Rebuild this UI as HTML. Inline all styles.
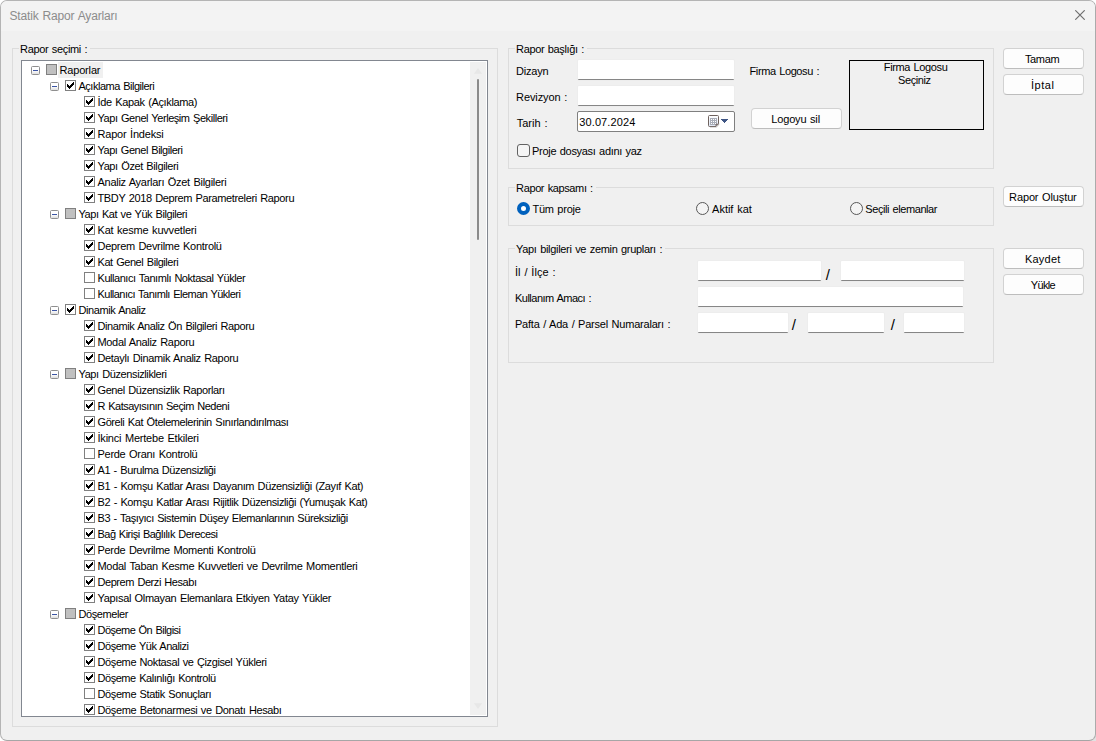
<!DOCTYPE html>
<html lang="tr">
<head>
<meta charset="utf-8">
<title>Statik Rapor Ayarları</title>
<style>
html,body{margin:0;padding:0;}
body{width:1096px;height:741px;background:#fff;position:relative;overflow:hidden;font-family:"Liberation Sans",sans-serif;font-size:11px;color:#000;}
#win{position:absolute;left:0;top:0;width:1094px;height:739px;border:1px solid #b4b4b4;border-right-color:#ababab;border-bottom-color:#a6a6a6;border-radius:7px;background:#f0f0f0;overflow:hidden;}
#win *{position:absolute;box-sizing:border-box;}
#title{left:0;top:0;width:1094px;height:30px;background:#f3f3f3;}
.t{white-space:nowrap;line-height:16px;height:16px;word-spacing:0.8px;}
.grp{border:1px solid #dcdcdc;}
.tree{left:20px;top:59px;width:467px;height:657px;border:1px solid #828790;background:#fff;overflow:hidden;}
.cb{width:11px;height:11px;border:1px solid #808080;background:#fff;}
.cb.g{background:#c0c0c0;}
.cb svg{left:1px;top:1px;width:7px;height:7px;}
.ex{width:9px;height:9px;border:1px solid #8f8f8f;border-radius:1.5px;background:linear-gradient(#fff 0%,#fff 50%,#dedede 100%);}
.ex i{left:1px;top:3px;width:5px;height:1px;background:#3b55a5;}
.in{background:#fff;border-bottom:1px solid #868686;box-shadow:0 0 0 1px #ededed;border-radius:1px;}
.btn{background:#fdfdfd;border:1px solid #d2d2d2;border-bottom-color:#bdbdbd;border-radius:4px;}
.rd{width:13px;height:13px;border-radius:50%;border:1px solid #585858;background:#f4f4f4;}
.rd.on{border:4px solid #0061bd;background:#fff;}
</style>
</head>
<body>
<div style="position:absolute;left:1086px;top:731px;width:10px;height:10px;background:#e2e2e2"></div>
<div id="win">
<div id="title"></div>

<svg style="left:1074px;top:9px;width:10px;height:10px" viewBox="0 0 10 10"><path d="M0.3 0.3 L9.7 9.7 M9.7 0.3 L0.3 9.7" stroke="#6e6e6e" stroke-width="1.15" fill="none"/></svg>
<div class="grp" style="left:11px;top:47px;width:486px;height:679px"></div>
<div class="grp" style="left:507px;top:47px;width:486px;height:121px"></div>
<div class="grp" style="left:507px;top:186px;width:486px;height:39px"></div>
<div class="grp" style="left:507px;top:247px;width:486px;height:115px"></div>
<div class="tree" style="left:20px;top:59px;width:467px;height:657px">
<div style="left:448px;top:1px;width:16px;height:653px;background:#f0f0f0"></div>
<div style="left:455px;top:18px;width:2px;height:161px;background:#8b8b8b;border-radius:1px"></div>
<svg style="left:452px;top:7px;width:8px;height:6px" viewBox="0 0 8 6"><path d="M4 0 L8 5.8 L0 5.8 Z" fill="#e7e7e7"/></svg>
<svg style="left:452px;top:642px;width:8px;height:6px" viewBox="0 0 8 6"><path d="M4 6 L8 0.2 L0 0.2 Z" fill="#e7e7e7"/></svg>
<div class="ex" style="left:9px;top:5px"><i></i></div>
<div class="cb g" style="left:24px;top:3px"></div>
<div style="left:36px;top:1px;width:45px;height:16px;background:#f0f0f0"></div>
<div class="t" style="left:37.5px;top:1px;letter-spacing:-0.170px">Raporlar</div>
<div class="ex" style="left:28px;top:21px"><i></i></div>
<div class="cb" style="left:43px;top:19px"><svg viewBox="0 0 7 7"><path d="M0 2h1v1h1v1h1v-1h1v-1h1v-1h1v-1h1v3h-1v1h-1v1h-1v1h-1v1h-1v-1h-1v-1h-1z" fill="#000"/></svg></div>
<div class="t" style="left:56.5px;top:17px;letter-spacing:-0.491px">Açıklama Bilgileri</div>
<div class="cb" style="left:62px;top:35px"><svg viewBox="0 0 7 7"><path d="M0 2h1v1h1v1h1v-1h1v-1h1v-1h1v-1h1v3h-1v1h-1v1h-1v1h-1v1h-1v-1h-1v-1h-1z" fill="#000"/></svg></div>
<div class="t" style="left:75.5px;top:33px;letter-spacing:-0.356px">İde Kapak (Açıklama)</div>
<div class="cb" style="left:62px;top:51px"><svg viewBox="0 0 7 7"><path d="M0 2h1v1h1v1h1v-1h1v-1h1v-1h1v-1h1v3h-1v1h-1v1h-1v1h-1v1h-1v-1h-1v-1h-1z" fill="#000"/></svg></div>
<div class="t" style="left:75.5px;top:49px;letter-spacing:-0.440px">Yapı Genel Yerleşim Şekilleri</div>
<div class="cb" style="left:62px;top:67px"><svg viewBox="0 0 7 7"><path d="M0 2h1v1h1v1h1v-1h1v-1h1v-1h1v-1h1v3h-1v1h-1v1h-1v1h-1v1h-1v-1h-1v-1h-1z" fill="#000"/></svg></div>
<div class="t" style="left:75.5px;top:65px;letter-spacing:-0.206px">Rapor İndeksi</div>
<div class="cb" style="left:62px;top:83px"><svg viewBox="0 0 7 7"><path d="M0 2h1v1h1v1h1v-1h1v-1h1v-1h1v-1h1v3h-1v1h-1v1h-1v1h-1v1h-1v-1h-1v-1h-1z" fill="#000"/></svg></div>
<div class="t" style="left:75.5px;top:81px;letter-spacing:-0.465px">Yapı Genel Bilgileri</div>
<div class="cb" style="left:62px;top:99px"><svg viewBox="0 0 7 7"><path d="M0 2h1v1h1v1h1v-1h1v-1h1v-1h1v-1h1v3h-1v1h-1v1h-1v1h-1v1h-1v-1h-1v-1h-1z" fill="#000"/></svg></div>
<div class="t" style="left:75.5px;top:97px;letter-spacing:-0.389px">Yapı Özet Bilgileri</div>
<div class="cb" style="left:62px;top:115px"><svg viewBox="0 0 7 7"><path d="M0 2h1v1h1v1h1v-1h1v-1h1v-1h1v-1h1v3h-1v1h-1v1h-1v1h-1v1h-1v-1h-1v-1h-1z" fill="#000"/></svg></div>
<div class="t" style="left:75.5px;top:113px;letter-spacing:-0.280px">Analiz Ayarları Özet Bilgileri</div>
<div class="cb" style="left:62px;top:131px"><svg viewBox="0 0 7 7"><path d="M0 2h1v1h1v1h1v-1h1v-1h1v-1h1v-1h1v3h-1v1h-1v1h-1v1h-1v1h-1v-1h-1v-1h-1z" fill="#000"/></svg></div>
<div class="t" style="left:75.5px;top:129px;letter-spacing:-0.368px">TBDY 2018 Deprem Parametreleri Raporu</div>
<div class="ex" style="left:28px;top:149px"><i></i></div>
<div class="cb g" style="left:43px;top:147px"></div>
<div class="t" style="left:56.5px;top:145px;letter-spacing:-0.441px">Yapı Kat ve Yük Bilgileri</div>
<div class="cb" style="left:62px;top:163px"><svg viewBox="0 0 7 7"><path d="M0 2h1v1h1v1h1v-1h1v-1h1v-1h1v-1h1v3h-1v1h-1v1h-1v1h-1v1h-1v-1h-1v-1h-1z" fill="#000"/></svg></div>
<div class="t" style="left:75.5px;top:161px;letter-spacing:-0.204px">Kat kesme kuvvetleri</div>
<div class="cb" style="left:62px;top:179px"><svg viewBox="0 0 7 7"><path d="M0 2h1v1h1v1h1v-1h1v-1h1v-1h1v-1h1v3h-1v1h-1v1h-1v1h-1v1h-1v-1h-1v-1h-1z" fill="#000"/></svg></div>
<div class="t" style="left:75.5px;top:177px;letter-spacing:-0.292px">Deprem Devrilme Kontrolü</div>
<div class="cb" style="left:62px;top:195px"><svg viewBox="0 0 7 7"><path d="M0 2h1v1h1v1h1v-1h1v-1h1v-1h1v-1h1v3h-1v1h-1v1h-1v1h-1v1h-1v-1h-1v-1h-1z" fill="#000"/></svg></div>
<div class="t" style="left:75.5px;top:193px;letter-spacing:-0.435px">Kat Genel Bilgileri</div>
<div class="cb" style="left:62px;top:211px"></div>
<div class="t" style="left:75.5px;top:209px;letter-spacing:-0.460px">Kullanıcı Tanımlı Noktasal Yükler</div>
<div class="cb" style="left:62px;top:227px"></div>
<div class="t" style="left:75.5px;top:225px;letter-spacing:-0.527px">Kullanıcı Tanımlı Eleman Yükleri</div>
<div class="ex" style="left:28px;top:245px"><i></i></div>
<div class="cb" style="left:43px;top:243px"><svg viewBox="0 0 7 7"><path d="M0 2h1v1h1v1h1v-1h1v-1h1v-1h1v-1h1v3h-1v1h-1v1h-1v1h-1v1h-1v-1h-1v-1h-1z" fill="#000"/></svg></div>
<div class="t" style="left:56.5px;top:241px;letter-spacing:-0.419px">Dinamik Analiz</div>
<div class="cb" style="left:62px;top:259px"><svg viewBox="0 0 7 7"><path d="M0 2h1v1h1v1h1v-1h1v-1h1v-1h1v-1h1v3h-1v1h-1v1h-1v1h-1v1h-1v-1h-1v-1h-1z" fill="#000"/></svg></div>
<div class="t" style="left:75.5px;top:257px;letter-spacing:-0.413px">Dinamik Analiz Ön Bilgileri Raporu</div>
<div class="cb" style="left:62px;top:275px"><svg viewBox="0 0 7 7"><path d="M0 2h1v1h1v1h1v-1h1v-1h1v-1h1v-1h1v3h-1v1h-1v1h-1v1h-1v1h-1v-1h-1v-1h-1z" fill="#000"/></svg></div>
<div class="t" style="left:75.5px;top:273px;letter-spacing:-0.329px">Modal Analiz Raporu</div>
<div class="cb" style="left:62px;top:291px"><svg viewBox="0 0 7 7"><path d="M0 2h1v1h1v1h1v-1h1v-1h1v-1h1v-1h1v3h-1v1h-1v1h-1v1h-1v1h-1v-1h-1v-1h-1z" fill="#000"/></svg></div>
<div class="t" style="left:75.5px;top:289px;letter-spacing:-0.353px">Detaylı Dinamik Analiz Raporu</div>
<div class="ex" style="left:28px;top:309px"><i></i></div>
<div class="cb g" style="left:43px;top:307px"></div>
<div class="t" style="left:56.5px;top:305px;letter-spacing:-0.393px">Yapı Düzensizlikleri</div>
<div class="cb" style="left:62px;top:323px"><svg viewBox="0 0 7 7"><path d="M0 2h1v1h1v1h1v-1h1v-1h1v-1h1v-1h1v3h-1v1h-1v1h-1v1h-1v1h-1v-1h-1v-1h-1z" fill="#000"/></svg></div>
<div class="t" style="left:75.5px;top:321px;letter-spacing:-0.402px">Genel Düzensizlik Raporları</div>
<div class="cb" style="left:62px;top:339px"><svg viewBox="0 0 7 7"><path d="M0 2h1v1h1v1h1v-1h1v-1h1v-1h1v-1h1v3h-1v1h-1v1h-1v1h-1v1h-1v-1h-1v-1h-1z" fill="#000"/></svg></div>
<div class="t" style="left:75.5px;top:337px;letter-spacing:-0.515px">R Katsayısının Seçim Nedeni</div>
<div class="cb" style="left:62px;top:355px"><svg viewBox="0 0 7 7"><path d="M0 2h1v1h1v1h1v-1h1v-1h1v-1h1v-1h1v3h-1v1h-1v1h-1v1h-1v1h-1v-1h-1v-1h-1z" fill="#000"/></svg></div>
<div class="t" style="left:75.5px;top:353px;letter-spacing:-0.406px">Göreli Kat Ötelemelerinin Sınırlandırılması</div>
<div class="cb" style="left:62px;top:371px"><svg viewBox="0 0 7 7"><path d="M0 2h1v1h1v1h1v-1h1v-1h1v-1h1v-1h1v3h-1v1h-1v1h-1v1h-1v1h-1v-1h-1v-1h-1z" fill="#000"/></svg></div>
<div class="t" style="left:75.5px;top:369px;letter-spacing:-0.211px">İkinci Mertebe Etkileri</div>
<div class="cb" style="left:62px;top:387px"></div>
<div class="t" style="left:75.5px;top:385px;letter-spacing:-0.282px">Perde Oranı Kontrolü</div>
<div class="cb" style="left:62px;top:403px"><svg viewBox="0 0 7 7"><path d="M0 2h1v1h1v1h1v-1h1v-1h1v-1h1v-1h1v3h-1v1h-1v1h-1v1h-1v1h-1v-1h-1v-1h-1z" fill="#000"/></svg></div>
<div class="t" style="left:75.5px;top:401px;letter-spacing:-0.410px">A1 - Burulma Düzensizliği</div>
<div class="cb" style="left:62px;top:419px"><svg viewBox="0 0 7 7"><path d="M0 2h1v1h1v1h1v-1h1v-1h1v-1h1v-1h1v3h-1v1h-1v1h-1v1h-1v1h-1v-1h-1v-1h-1z" fill="#000"/></svg></div>
<div class="t" style="left:75.5px;top:417px;letter-spacing:-0.382px">B1 - Komşu Katlar Arası Dayanım Düzensizliği (Zayıf Kat)</div>
<div class="cb" style="left:62px;top:435px"><svg viewBox="0 0 7 7"><path d="M0 2h1v1h1v1h1v-1h1v-1h1v-1h1v-1h1v3h-1v1h-1v1h-1v1h-1v1h-1v-1h-1v-1h-1z" fill="#000"/></svg></div>
<div class="t" style="left:75.5px;top:433px;letter-spacing:-0.383px">B2 - Komşu Katlar Arası Rijitlik Düzensizliği (Yumuşak Kat)</div>
<div class="cb" style="left:62px;top:451px"><svg viewBox="0 0 7 7"><path d="M0 2h1v1h1v1h1v-1h1v-1h1v-1h1v-1h1v3h-1v1h-1v1h-1v1h-1v1h-1v-1h-1v-1h-1z" fill="#000"/></svg></div>
<div class="t" style="left:75.5px;top:449px;letter-spacing:-0.435px">B3 - Taşıyıcı Sistemin Düşey Elemanlarının Süreksizliği</div>
<div class="cb" style="left:62px;top:467px"><svg viewBox="0 0 7 7"><path d="M0 2h1v1h1v1h1v-1h1v-1h1v-1h1v-1h1v3h-1v1h-1v1h-1v1h-1v1h-1v-1h-1v-1h-1z" fill="#000"/></svg></div>
<div class="t" style="left:75.5px;top:465px;letter-spacing:-0.517px">Bağ Kirişi Bağlılık Derecesi</div>
<div class="cb" style="left:62px;top:483px"><svg viewBox="0 0 7 7"><path d="M0 2h1v1h1v1h1v-1h1v-1h1v-1h1v-1h1v3h-1v1h-1v1h-1v1h-1v1h-1v-1h-1v-1h-1z" fill="#000"/></svg></div>
<div class="t" style="left:75.5px;top:481px;letter-spacing:-0.303px">Perde Devrilme Momenti Kontrolü</div>
<div class="cb" style="left:62px;top:499px"><svg viewBox="0 0 7 7"><path d="M0 2h1v1h1v1h1v-1h1v-1h1v-1h1v-1h1v3h-1v1h-1v1h-1v1h-1v1h-1v-1h-1v-1h-1z" fill="#000"/></svg></div>
<div class="t" style="left:75.5px;top:497px;letter-spacing:-0.290px">Modal Taban Kesme Kuvvetleri ve Devrilme Momentleri</div>
<div class="cb" style="left:62px;top:515px"><svg viewBox="0 0 7 7"><path d="M0 2h1v1h1v1h1v-1h1v-1h1v-1h1v-1h1v3h-1v1h-1v1h-1v1h-1v1h-1v-1h-1v-1h-1z" fill="#000"/></svg></div>
<div class="t" style="left:75.5px;top:513px;letter-spacing:-0.437px">Deprem Derzi Hesabı</div>
<div class="cb" style="left:62px;top:531px"><svg viewBox="0 0 7 7"><path d="M0 2h1v1h1v1h1v-1h1v-1h1v-1h1v-1h1v3h-1v1h-1v1h-1v1h-1v1h-1v-1h-1v-1h-1z" fill="#000"/></svg></div>
<div class="t" style="left:75.5px;top:529px;letter-spacing:-0.326px">Yapısal Olmayan Elemanlara Etkiyen Yatay Yükler</div>
<div class="ex" style="left:28px;top:549px"><i></i></div>
<div class="cb g" style="left:43px;top:547px"></div>
<div class="t" style="left:56.5px;top:545px;letter-spacing:-0.411px">Döşemeler</div>
<div class="cb" style="left:62px;top:563px"><svg viewBox="0 0 7 7"><path d="M0 2h1v1h1v1h1v-1h1v-1h1v-1h1v-1h1v3h-1v1h-1v1h-1v1h-1v1h-1v-1h-1v-1h-1z" fill="#000"/></svg></div>
<div class="t" style="left:75.5px;top:561px;letter-spacing:-0.537px">Döşeme Ön Bilgisi</div>
<div class="cb" style="left:62px;top:579px"><svg viewBox="0 0 7 7"><path d="M0 2h1v1h1v1h1v-1h1v-1h1v-1h1v-1h1v3h-1v1h-1v1h-1v1h-1v1h-1v-1h-1v-1h-1z" fill="#000"/></svg></div>
<div class="t" style="left:75.5px;top:577px;letter-spacing:-0.454px">Döşeme Yük Analizi</div>
<div class="cb" style="left:62px;top:595px"><svg viewBox="0 0 7 7"><path d="M0 2h1v1h1v1h1v-1h1v-1h1v-1h1v-1h1v3h-1v1h-1v1h-1v1h-1v1h-1v-1h-1v-1h-1z" fill="#000"/></svg></div>
<div class="t" style="left:75.5px;top:593px;letter-spacing:-0.393px">Döşeme Noktasal ve Çizgisel Yükleri</div>
<div class="cb" style="left:62px;top:611px"><svg viewBox="0 0 7 7"><path d="M0 2h1v1h1v1h1v-1h1v-1h1v-1h1v-1h1v3h-1v1h-1v1h-1v1h-1v1h-1v-1h-1v-1h-1z" fill="#000"/></svg></div>
<div class="t" style="left:75.5px;top:609px;letter-spacing:-0.454px">Döşeme Kalınlığı Kontrolü</div>
<div class="cb" style="left:62px;top:627px"></div>
<div class="t" style="left:75.5px;top:625px;letter-spacing:-0.389px">Döşeme Statik Sonuçları</div>
<div class="cb" style="left:62px;top:643px"><svg viewBox="0 0 7 7"><path d="M0 2h1v1h1v1h1v-1h1v-1h1v-1h1v-1h1v3h-1v1h-1v1h-1v1h-1v1h-1v-1h-1v-1h-1z" fill="#000"/></svg></div>
<div class="t" style="left:75.5px;top:641px;letter-spacing:-0.371px">Döşeme Betonarmesi ve Donatı Hesabı</div>
</div>
<div class="in" style="left:577px;top:59px;width:156px;height:20px"></div>
<div class="in" style="left:577px;top:85px;width:156px;height:20px"></div>
<div class="in" style="left:697px;top:260px;width:123px;height:20px"></div>
<div class="in" style="left:840px;top:260px;width:123px;height:20px"></div>
<div class="in" style="left:697px;top:286px;width:265px;height:20px"></div>
<div class="in" style="left:697px;top:312px;width:90px;height:20px"></div>
<div class="in" style="left:807px;top:312px;width:76px;height:20px"></div>
<div class="in" style="left:903px;top:312px;width:60px;height:20px"></div>
<div style="left:576px;top:110px;width:158px;height:21px;border:1px solid #7f7f7f;border-radius:2px;background:#fff"></div>
<svg style="left:707px;top:114px;width:12px;height:13px" viewBox="0 0 12 13">
<defs><linearGradient id="cg" x1="0" y1="0" x2="0" y2="1"><stop offset="0" stop-color="#fff"/><stop offset="1" stop-color="#dfe7f5"/></linearGradient></defs>
<path d="M1.5 0.5 H9.5 Q10.5 0.5 10.5 1.5 V8.8 L8 11.5 H1.5 Q0.5 11.5 0.5 10.5 V1.5 Q0.5 0.5 1.5 0.5 Z" fill="url(#cg)" stroke="#6f625e"/>
<rect x="2" y="3" width="7" height="7" fill="#a9adb8"/>
<g fill="#fff"><rect x="3" y="4" width="1" height="1"/><rect x="5" y="4" width="1" height="1"/><rect x="7" y="4" width="1" height="1"/><rect x="3" y="6" width="1" height="1"/><rect x="5" y="6" width="1" height="1"/><rect x="7" y="6" width="1" height="1"/><rect x="3" y="8" width="1" height="1"/><rect x="5" y="8" width="1" height="1"/><rect x="7" y="8" width="1" height="1"/></g>
<path d="M8 11.5 V9.2 H10.4" fill="none" stroke="#6f625e" stroke-width="0.9"/>
<path d="M2 12.4 H8.5 L11.3 9.6" fill="none" stroke="#d9d9d9" stroke-width="0.9"/>
</svg>
<svg style="left:720px;top:118px;width:7px;height:4px" viewBox="0 0 7 4"><path d="M0 0h7v1h-1v1h-1v1h-1v1h-1v-1h-1v-1h-1v-1h-1z" fill="#3f5584"/></svg>
<div style="left:516px;top:143px;width:13px;height:13px;border:1px solid #626262;border-radius:3px;background:#f5f5f5"></div>
<div style="left:848px;top:59px;width:135px;height:70px;border:1px solid #000"></div>
<div class="btn" style="left:1002px;top:47px;width:81px;height:21px"></div>
<div class="btn" style="left:1002px;top:73px;width:81px;height:21px"></div>
<div class="btn" style="left:1002px;top:185px;width:81px;height:21px"></div>
<div class="btn" style="left:1002px;top:247px;width:81px;height:21px"></div>
<div class="btn" style="left:1002px;top:273px;width:81px;height:21px"></div>
<div class="btn" style="left:750px;top:107px;width:91px;height:21px"></div>
<div class="rd on" style="left:516px;top:201px"></div>
<div class="rd" style="left:695px;top:201px"></div>
<div class="rd" style="left:849px;top:201px"></div>
<div class="t" style="left:8.5px;top:7px;font-size:12px;color:#8c8c8c;letter-spacing:-0.161px;">Statik Rapor Ayarları</div>
<div class="t" style="left:18.1px;top:40px;padding:0 3px 0 1px;font-size:11px;color:#000;letter-spacing:-0.346px;background:#f0f0f0;">Rapor seçimi :</div>
<div class="t" style="left:514.1px;top:40px;padding:0 3px 0 1px;font-size:11px;color:#000;letter-spacing:-0.353px;background:#f0f0f0;">Rapor başlığı :</div>
<div class="t" style="left:515.1px;top:62px;font-size:11px;color:#000;letter-spacing:-0.205px;">Dizayn</div>
<div class="t" style="left:515.1px;top:88px;font-size:11px;color:#000;letter-spacing:-0.095px;">Revizyon :</div>
<div class="t" style="left:515.7px;top:114px;font-size:11px;color:#000;letter-spacing:0.005px;">Tarih :</div>
<div class="t" style="left:578.3px;top:113px;font-size:11px;color:#000;letter-spacing:0.104px;">30.07.2024</div>
<div class="t" style="left:531.1px;top:142px;font-size:11px;color:#000;letter-spacing:-0.307px;">Proje dosyası adını yaz</div>
<div class="t" style="left:748.5px;top:62px;font-size:11px;color:#000;letter-spacing:-0.383px;">Firma Logosu :</div>
<div class="t" style="left:514.1px;top:179px;padding:0 3px 0 1px;font-size:11px;color:#000;letter-spacing:-0.379px;background:#f0f0f0;">Rapor kapsamı :</div>
<div class="t" style="left:531.4px;top:200px;font-size:11px;color:#000;letter-spacing:-0.229px;">Tüm proje</div>
<div class="t" style="left:711.1px;top:200px;font-size:11px;color:#000;letter-spacing:-0.016px;">Aktif kat</div>
<div class="t" style="left:864.3px;top:200px;font-size:11px;color:#000;letter-spacing:-0.417px;">Seçili elemanlar</div>
<div class="t" style="left:514.0px;top:240px;padding:0 3px 0 1px;font-size:11px;color:#000;letter-spacing:-0.308px;background:#f0f0f0;">Yapı bilgileri ve zemin grupları :</div>
<div class="t" style="left:514.0px;top:263px;font-size:11px;color:#000;letter-spacing:0.019px;">İl / İlçe :</div>
<div class="t" style="left:514.0px;top:289px;font-size:11px;color:#000;letter-spacing:-0.510px;">Kullanım Amacı :</div>
<div class="t" style="left:514.0px;top:315px;font-size:11px;color:#000;letter-spacing:-0.220px;">Pafta / Ada / Parsel Numaraları :</div>
<div class="t" style="left:824.8px;top:266px;font-size:15px;color:#000;letter-spacing:0.000px;">/</div>
<div class="t" style="left:790.8px;top:316px;font-size:15px;color:#000;letter-spacing:0.000px;">/</div>
<div class="t" style="left:889.8px;top:316px;font-size:15px;color:#000;letter-spacing:0.000px;">/</div>
<div class="t" style="left:1023.9px;top:50px;font-size:11px;letter-spacing:-0.341px">Tamam</div>
<div class="t" style="left:1029.9px;top:76px;font-size:11px;letter-spacing:0.551px">İptal</div>
<div class="t" style="left:1008.1px;top:188px;font-size:11px;letter-spacing:-0.132px">Rapor Oluştur</div>
<div class="t" style="left:1023.9px;top:250px;font-size:11px;letter-spacing:0.230px">Kaydet</div>
<div class="t" style="left:1029.7px;top:276px;font-size:11px;letter-spacing:-0.633px">Yükle</div>
<div class="t" style="left:770.3px;top:110px;font-size:11px;letter-spacing:-0.172px">Logoyu sil</div>
<div class="t" style="left:882.8px;top:58px;font-size:11px;letter-spacing:-0.370px">Firma Logosu</div>
<div class="t" style="left:897.0px;top:71px;font-size:11px;letter-spacing:-0.411px">Seçiniz</div>
</div>
</body>
</html>
